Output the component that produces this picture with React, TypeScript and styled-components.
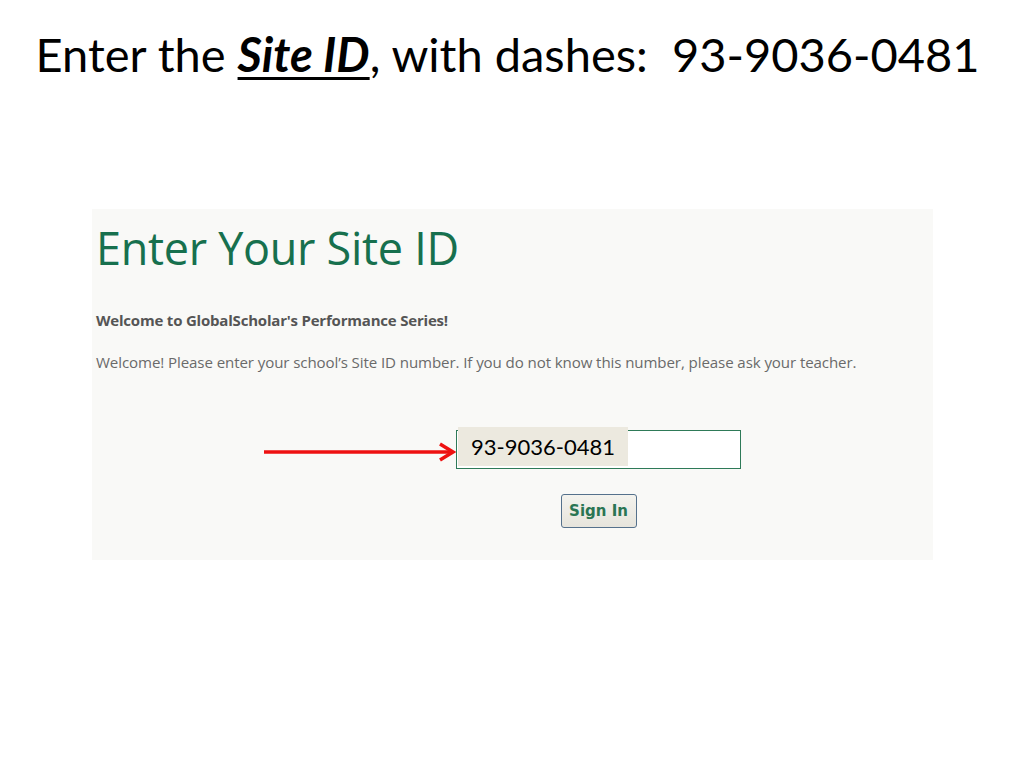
import React from 'react';
import styled, { createGlobalStyle } from 'styled-components';

const GlobalStyle = createGlobalStyle`
    html, body {
        margin: 0;
        padding: 0;
        background: #ffffff;
    }
`;

const Slide = styled.div`
    width: 1024px;
    height: 768px;
    display: flex;
    flex-direction: column;
    background: #ffffff;
`;

const SlideTitle = styled.h1`
    margin: 22px 0 0;
    padding-right: 9px;
    text-align: center;
    font-family: 'Lato', 'Open Sans', sans-serif;
    font-weight: 400;
    font-size: 47px;
    line-height: 64px;
    color: #000000;
    em {
        font-weight: 700;
        text-decoration: underline;
        text-decoration-thickness: 3px;
        text-underline-offset: 5px;
    }
`;

const Panel = styled.div`
    margin: 123px 0 0 92px;
    width: 841px;
    height: 351px;
    box-sizing: border-box;
    padding: 14px 0 0 4px;
    background: #f9f9f7;
    display: flex;
    flex-direction: column;
`;

const PanelTitle = styled.h2`
    margin: 0;
    font-family: 'Open Sans', sans-serif;
    font-weight: 400;
    font-size: 45px;
    line-height: 50px;
    color: #17704e;
    letter-spacing: -0.3px;
`;

const Intro = styled.p`
    margin: 39px 0 0;
    font-family: 'Open Sans', sans-serif;
    font-weight: 700;
    font-size: 15px;
    line-height: 16px;
    letter-spacing: -0.2px;
    color: #555555;
`;

const Note = styled.p`
    margin: 25px 0 0;
    font-family: 'Open Sans', sans-serif;
    font-size: 15.1px;
    line-height: 18px;
    letter-spacing: -0.1px;
    color: #6a6a6a;
`;

const FormRow = styled.div`
    margin: 59px 0 0 168px;
    display: flex;
    align-items: flex-start;
`;

const Arrow = styled.svg`
    margin-top: 12px;
    flex: none;
`;

const FormColumn = styled.div`
    display: flex;
    flex-direction: column;
    align-items: center;
`;

const InputBox = styled.div`
    position: relative;
    width: 285px;
    height: 39px;
    box-sizing: border-box;
    border: 1px solid #2e7a58;
    background: #ffffff;
`;

const Callout = styled.span`
    position: absolute;
    left: 1px;
    top: -4px;
    width: 170px;
    height: 39px;
    box-sizing: border-box;
    padding-left: 13px;
    background: #ece9df;
    font-family: 'Lato', 'Open Sans', sans-serif;
    font-size: 22px;
    line-height: 39px;
    color: #000000;
`;

const SignIn = styled.button`
    margin-top: 25px;
    width: 76px;
    height: 34px;
    padding: 0;
    border: 1px solid #55718c;
    border-radius: 3px;
    background: linear-gradient(#f4f3ee, #e6e4dc);
    font-family: 'DejaVu Sans', 'Liberation Sans', sans-serif;
    font-weight: 700;
    font-size: 15px;
    color: #2a7553;
`;

export default function App() {
    return (
        <Slide>
            <GlobalStyle />
            <SlideTitle>Enter the <em>Site ID</em>, with dashes:&nbsp; 93-9036-0481</SlideTitle>
            <Panel>
                <PanelTitle>Enter Your Site ID</PanelTitle>
                <Intro>Welcome to GlobalScholar's Performance Series!</Intro>
                <Note>Welcome! Please enter your school’s Site ID number. If you do not know this number, please ask your teacher.</Note>
                <FormRow>
                    <Arrow width="192" height="20" viewBox="0 0 192 20">
                        <line x1="0" y1="10" x2="188" y2="10" stroke="#ee1111" strokeWidth="3.5" />
                        <polyline points="176,2 189,10 176,18" fill="none" stroke="#ee1111" strokeWidth="3.5" />
                    </Arrow>
                    <FormColumn>
                        <InputBox>
                            <Callout>93-9036-0481</Callout>
                        </InputBox>
                        <SignIn>Sign In</SignIn>
                    </FormColumn>
                </FormRow>
            </Panel>
        </Slide>
    );
}
